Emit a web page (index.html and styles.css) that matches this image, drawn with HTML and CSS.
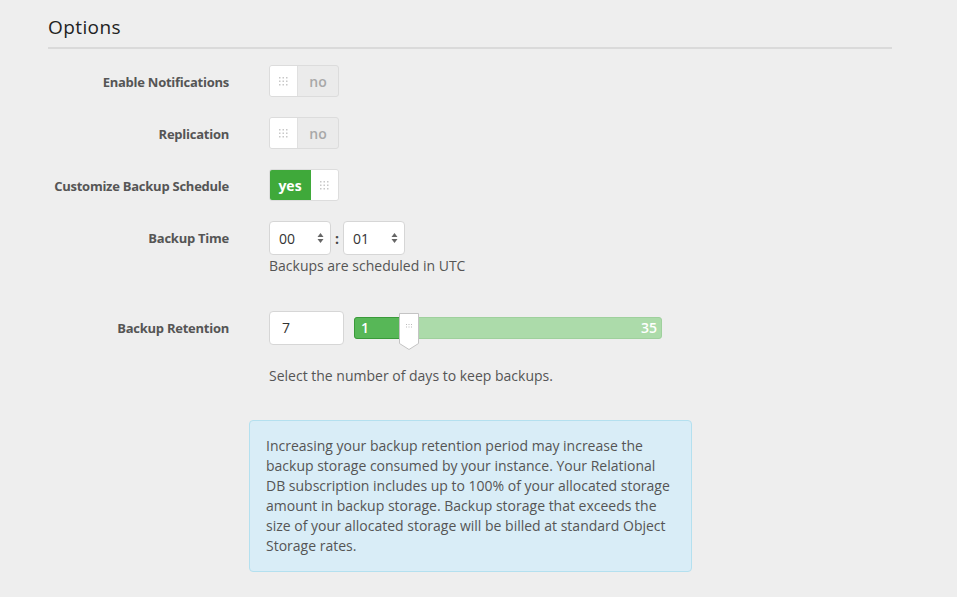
FILE: index.html
```html
<!DOCTYPE html>
<html>
<head>
<meta charset="utf-8">
<link rel="stylesheet" href="styles.css">
</head>
<body>
<div class="page">
  <h2 class="section-title">Options</h2>
  <div class="form">
    <div class="row">
      <div class="label">Enable Notifications</div>
      <div class="control">
        <div class="toggle off">
          <span class="handle"><svg width="9" height="9" viewBox="0 0 9 9"><g fill="#c8c8c8"><rect x="0" y="0" width="1.5" height="1.5"/><rect x="3.5" y="0" width="1.5" height="1.5"/><rect x="7" y="0" width="1.5" height="1.5"/><rect x="0" y="3.5" width="1.5" height="1.5"/><rect x="3.5" y="3.5" width="1.5" height="1.5"/><rect x="7" y="3.5" width="1.5" height="1.5"/><rect x="0" y="7" width="1.5" height="1.5"/><rect x="3.5" y="7" width="1.5" height="1.5"/><rect x="7" y="7" width="1.5" height="1.5"/></g></svg></span>
          <span class="state">no</span>
        </div>
      </div>
    </div>
    <div class="row">
      <div class="label">Replication</div>
      <div class="control">
        <div class="toggle off">
          <span class="handle"><svg width="9" height="9" viewBox="0 0 9 9"><g fill="#c8c8c8"><rect x="0" y="0" width="1.5" height="1.5"/><rect x="3.5" y="0" width="1.5" height="1.5"/><rect x="7" y="0" width="1.5" height="1.5"/><rect x="0" y="3.5" width="1.5" height="1.5"/><rect x="3.5" y="3.5" width="1.5" height="1.5"/><rect x="7" y="3.5" width="1.5" height="1.5"/><rect x="0" y="7" width="1.5" height="1.5"/><rect x="3.5" y="7" width="1.5" height="1.5"/><rect x="7" y="7" width="1.5" height="1.5"/></g></svg></span>
          <span class="state">no</span>
        </div>
      </div>
    </div>
    <div class="row">
      <div class="label">Customize Backup Schedule</div>
      <div class="control">
        <div class="toggle on">
          <span class="state">yes</span>
          <span class="handle"><svg width="9" height="9" viewBox="0 0 9 9"><g fill="#c8c8c8"><rect x="0" y="0" width="1.5" height="1.5"/><rect x="3.5" y="0" width="1.5" height="1.5"/><rect x="7" y="0" width="1.5" height="1.5"/><rect x="0" y="3.5" width="1.5" height="1.5"/><rect x="3.5" y="3.5" width="1.5" height="1.5"/><rect x="7" y="3.5" width="1.5" height="1.5"/><rect x="0" y="7" width="1.5" height="1.5"/><rect x="3.5" y="7" width="1.5" height="1.5"/><rect x="7" y="7" width="1.5" height="1.5"/></g></svg></span>
        </div>
      </div>
    </div>
    <div class="row time-row">
      <div class="label">Backup Time</div>
      <div class="control">
        <div class="time">
          <div class="select"><span>00</span><svg width="7" height="12" viewBox="0 0 7 12"><path d="M0.5 5 L3.5 1 L6.5 5 Z M0.5 7 L3.5 11 L6.5 7 Z" fill="#666"/></svg></div>
          <span class="colon">:</span>
          <div class="select"><span>01</span><svg width="7" height="12" viewBox="0 0 7 12"><path d="M0.5 5 L3.5 1 L6.5 5 Z M0.5 7 L3.5 11 L6.5 7 Z" fill="#666"/></svg></div>
        </div>
        <div class="help">Backups are scheduled in UTC</div>
      </div>
    </div>
    <div class="row retention-row">
      <div class="label">Backup Retention</div>
      <div class="control">
        <div class="retention">
          <div class="num-input">7</div>
          <div class="slider">
            <div class="fill"></div>
            <span class="min">1</span>
            <span class="max">35</span>
            <svg class="thumb" width="22" height="38" viewBox="0 0 22 38"><path d="M1.5 0.5 H20.5 V30.5 L11 36.5 L1.5 30.5 Z" fill="#fff" stroke="#c4c4c4"/><g fill="#bbb"><rect x="8" y="11" width="1" height="1"/><rect x="10.5" y="11" width="1" height="1"/><rect x="13" y="11" width="1" height="1"/><rect x="8" y="13.5" width="1" height="1"/><rect x="10.5" y="13.5" width="1" height="1"/><rect x="13" y="13.5" width="1" height="1"/></g></svg>
          </div>
        </div>
        <div class="help help-retention">Select the number of days to keep backups.</div>
      </div>
    </div>
    <div class="row">
      <div class="label"></div>
      <div class="control">
        <div class="info">Increasing your backup retention period may increase the backup storage consumed by your instance. Your Relational DB subscription includes up to 100% of your allocated storage amount in backup storage. Backup storage that exceeds the size of your allocated storage will be billed at standard Object Storage rates.</div>
      </div>
    </div>
  </div>
</div>
</body>
</html>
```

FILE: styles.css
```css
html, body {
  margin: 0;
  padding: 0;
  background: #eeeeee;
}
body {
  font-family: "Open Sans", "Liberation Sans", sans-serif;
  color: #555;
}
.page {
  width: 957px;
  height: 597px;
  overflow: hidden;
}
.section-title {
  margin: 0 65px 0 48px;
  padding: 15px 0 8px 0;
  font-size: 19px;
  font-weight: 400;
  line-height: 24px;
  color: #222;
  letter-spacing: 0.4px;
  border-bottom: 2px solid #dadada;
}
.form {
  padding-top: 16px;
}
.row {
  display: grid;
  grid-template-columns: 229px 1fr;
  column-gap: 40px;
  margin-bottom: 20px;
}
.label {
  text-align: right;
  font-size: 13px;
  font-weight: 700;
  letter-spacing: -0.25px;
  color: #555;
  line-height: 30px;
  padding-top: 2px;
}
.control {
  display: flex;
  flex-direction: column;
  align-items: flex-start;
}
.toggle {
  display: flex;
  width: 70px;
  height: 32px;
  box-sizing: border-box;
  border: 1px solid #dcdcdc;
  border-radius: 3px;
  overflow: hidden;
  background: #ebebeb;
}
.toggle .handle {
  width: 27px;
  background: #fff;
  display: flex;
  align-items: center;
  justify-content: center;
}
.toggle.off .handle {
  border-right: 1px solid #e0e0e0;
}
.toggle .state {
  flex: 1;
  display: flex;
  align-items: center;
  justify-content: center;
  font-size: 14px;
  font-weight: 700;
}
.toggle.off .state {
  color: #a8a8a8;
  font-weight: 600;
}
.toggle.on {
  border-color: #ddd;
}
.toggle.on .state {
  background: #3fa93a;
  color: #fff;
  margin: -1px 0 -1px -1px;
  border-radius: 3px 0 0 3px;
  flex: 0 0 42px;
}
.time {
  display: flex;
  align-items: center;
  height: 34px;
}
.select {
  width: 62px;
  height: 34px;
  box-sizing: border-box;
  border: 1px solid #d6d6d6;
  border-radius: 4px;
  background: #fff;
  display: flex;
  align-items: center;
  justify-content: space-between;
  padding: 0 6px 0 9px;
  font-size: 14px;
  color: #333;
}
.colon {
  width: 12px;
  text-align: center;
  font-weight: 700;
  font-size: 14px;
  color: #444;
}
.help {
  font-size: 14px;
  line-height: 20px;
  color: #555;
  margin-top: 1px;
}
.time-row .label {
  line-height: 34px;
  padding-top: 0;
}
.time-row {
  margin-bottom: 35px;
}
.retention-row .label {
  line-height: 34px;
  padding-top: 0;
}
.retention {
  display: flex;
  align-items: center;
  height: 34px;
}
.num-input {
  width: 75px;
  height: 34px;
  box-sizing: border-box;
  border: 1px solid #d6d6d6;
  border-radius: 4px;
  background: #fff;
  padding: 0 12px;
  font-size: 14px;
  line-height: 32px;
  color: #333;
}
.slider {
  position: relative;
  margin-left: 10px;
  width: 308px;
  height: 22px;
  box-sizing: border-box;
  background: #acdbaa;
  border: 1px solid #9fd09d;
  border-radius: 3px;
  margin-top: -1px;
}
.slider .fill {
  position: absolute;
  left: -1px;
  top: -1px;
  bottom: -1px;
  width: 50px;
  background: #57b757;
  border: 1px solid #3a9a3a;
  border-radius: 3px 0 0 3px;
}
.slider .min,
.slider .max {
  position: absolute;
  top: 0;
  line-height: 20px;
  font-size: 14px;
  font-weight: 600;
  color: #fff;
}
.slider .min {
  left: 6px;
}
.slider .max {
  right: 4px;
}
.slider .thumb {
  position: absolute;
  left: 43px;
  top: -5px;
}
.help-retention {
  margin-top: 21px;
}
.retention-row {
  margin-bottom: 34px;
}
.info {
  margin-left: -20px;
  width: 443px;
  box-sizing: border-box;
  background: #d9edf7;
  border: 1px solid #b4e0ef;
  border-radius: 4px;
  padding: 15px 16px 15px 16px;
  font-size: 14px;
  line-height: 20px;
  color: #555;
}
```
